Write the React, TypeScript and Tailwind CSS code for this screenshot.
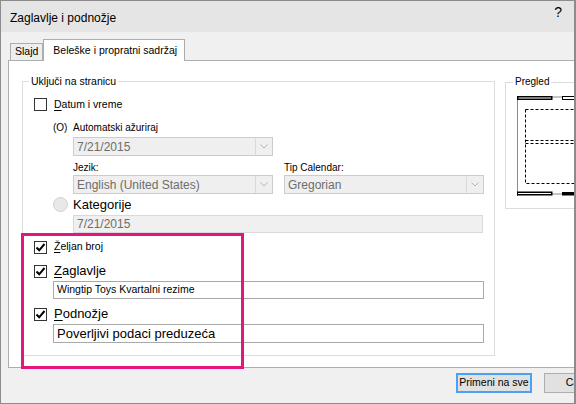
import React from 'react';

const FONT = { fontFamily: '"Liberation Sans", Arial, sans-serif' };

function CheckBox({ checked }: { checked?: boolean }) {
  return (
    <div className="w-[13px] h-[13px] shrink-0 border border-[#333333] bg-white flex items-center justify-center">
      {checked && (
        <svg width="11" height="11" viewBox="0 0 11 11">
          <path d="M1.5 5.5 L4.2 8.3 L9.5 2" fill="none" stroke="#000" strokeWidth="2" />
        </svg>
      )}
    </div>
  );
}

function Dropdown({ value, width }: { value: string; width: string }) {
  return (
    <div className={`${width} h-[19px] border border-[#cccccc] bg-[#efefef] flex items-stretch`}>
      <div className="flex-1 pl-[3px] flex items-center text-[12px] text-[#6d6d6d] leading-none">{value}</div>
      <div className="w-[17px] border-l border-[#dadada] flex items-center justify-center">
        <svg width="8" height="5" viewBox="0 0 8 5">
          <path d="M0.5 0.5 L4 4 L7.5 0.5" fill="none" stroke="#b5b5b5" strokeWidth="1" />
        </svg>
      </div>
    </div>
  );
}

function PreviewDrawing() {
  return (
    <svg width="70" height="100" viewBox="0 0 70 100">
      {/* page outline */}
      <line x1="0.5" y1="0" x2="0.5" y2="100" stroke="#8a8a8a" />
      <line x1="0" y1="1" x2="70" y2="1" stroke="#8a8a8a" />
      <line x1="0" y1="98" x2="70" y2="98" stroke="#8a8a8a" />
      {/* header bars */}
      <rect x="0.75" y="0.75" width="34" height="2.5" fill="#fff" stroke="#000" strokeWidth="1.5" />
      <rect x="45.5" y="0.5" width="24" height="3" fill="#fff" stroke="#000" strokeWidth="1" />
      {/* footer bars */}
      <rect x="0.75" y="96.25" width="34" height="2.5" fill="#fff" stroke="#000" strokeWidth="1.5" />
      <rect x="45" y="96" width="25" height="3.5" fill="#000" />
      {/* dashed content areas */}
      <rect x="8.5" y="13.5" width="70" height="74" fill="none" stroke="#000" strokeDasharray="3 2" />
      <line x1="8.5" y1="44.5" x2="70" y2="44.5" stroke="#000" strokeDasharray="3 2" />
      <line x1="8.5" y1="47.5" x2="70" y2="47.5" stroke="#000" strokeDasharray="3 2" />
    </svg>
  );
}

export default function App() {
  return (
    <div
      className="relative w-[576px] h-[404px] overflow-hidden bg-[#f0f0f0] border-l border-t border-b border-r-2 border-[#8c8c8c] flex flex-col text-black"
      style={FONT}
    >
      {/* Title bar */}
      <div className="h-[31px] shrink-0 bg-[#e5e5e5] flex items-center justify-between pl-[9px] pr-[12px]">
        <span className="text-[12px] pt-[2px]">Zaglavlje i podnožje</span>
        <span className="text-[14px] -mt-[8px]">?</span>
      </div>

      {/* Tabs */}
      <div className="pt-[7px] pl-[9px] flex items-end shrink-0">
        <div className="h-[17px] border border-b-0 border-[#adadad] bg-[#eeeeee] px-[4px] flex items-center text-[10.5px]">
          Slajd
        </div>
        <div className="relative z-10 -mb-px h-[22px] border border-b-0 border-[#adadad] bg-white pl-[9px] pr-[7px] flex items-center text-[10.5px]">
          Beleške i propratni sadržaj
        </div>
      </div>

      {/* Tab panel */}
      <div className="ml-[7px] h-[308px] shrink-0 border-t border-l border-b border-[#adadad] bg-white flex items-start pl-[13px] pt-[14px]">
        <fieldset className="w-[473px] h-[281px] shrink-0 border border-[#dcdcdc]">
          <legend className="ml-[6px] px-[2px] text-[10.5px] leading-[12px]">Uključi na stranicu</legend>
          <div className="pl-[11px] pt-[5px] flex flex-col text-[10.5px]">
            <div className="h-[25px] flex items-center gap-[7px]">
              <CheckBox />
              <span>
                <span className="underline underline-offset-2">D</span>atum i vreme
              </span>
            </div>
            <div className="h-[20px] pl-[19px] flex items-center text-[10px]">
              <span className="w-[20px]">(O)</span>
              <span>Automatski ažuriraj</span>
            </div>
            <div className="pl-[39px]">
              <Dropdown value="7/21/2015" width="w-[200px]" />
            </div>
            <div className="h-[19px] pl-[39px] pt-[3px] flex items-center gap-[11px] text-[10px]">
              <span className="w-[200px]">Jezik:</span>
              <span className="w-[200px]">Tip Calendar:</span>
            </div>
            <div className="pl-[39px] flex gap-[11px]">
              <Dropdown value="English (United States)" width="w-[200px]" />
              <Dropdown value="Gregorian" width="w-[200px]" />
            </div>
            <div className="h-[21px] pl-[19px] flex items-center gap-[5px]">
              <div className="w-[15px] h-[15px] rounded-full border border-[#d2d2d2] bg-[#e8e8e8]" />
              <span className="text-[13px]">Kategorije</span>
            </div>
            <div className="ml-[39px] w-[410px] h-[18px] border border-[#d9d9d9] bg-[#f0f0f0] pl-[3px] flex items-center text-[12px] text-[#6d6d6d]">
              7/21/2015
            </div>
            <div className="h-[28px] flex items-center gap-[7px]">
              <CheckBox checked />
              <span>
                <span className="underline underline-offset-2">Ž</span>eljan broj
              </span>
            </div>
            <div className="h-[20px] flex items-center gap-[7px]">
              <CheckBox checked />
              <span className="text-[13px]">
                <span className="underline underline-offset-2">Z</span>aglavlje
              </span>
            </div>
            <div className="ml-[19px] w-[431px] h-[18px] border border-[#a9a9a9] pl-[3px] flex items-center text-[10.5px]">
              Wingtip Toys Kvartalni rezime
            </div>
            <div className="h-[25px] pt-[5px] flex items-center gap-[7px]">
              <CheckBox checked />
              <span className="text-[13px]">
                <span className="underline underline-offset-2">P</span>odnožje
              </span>
            </div>
            <div className="ml-[19px] w-[431px] h-[19px] border border-[#a9a9a9] pl-[3px] flex items-center text-[13px]">
              Poverljivi podaci preduzeća
            </div>
          </div>
        </fieldset>

        <fieldset className="ml-[10px] w-[100px] h-[133px] shrink-0 border border-[#dcdcdc] mt-[1px]">
          <legend className="ml-[7px] px-[2px] text-[10px] leading-[12px]">Pregled</legend>
          <div className="pl-[11px] pt-[8px]">
            <PreviewDrawing />
          </div>
        </fieldset>
      </div>

      {/* Buttons */}
      <div className="pt-[5px] pl-[455px] flex gap-[12px] shrink-0">
        <button className="w-[76px] h-[20px] shrink-0 border-2 border-[#4ba2f2] bg-[#e1e1e1] text-[10.5px] flex items-center justify-center">
          Primeni na sve
        </button>
        <button className="w-[76px] h-[20px] shrink-0 border border-[#adadad] bg-[#e1e1e1] text-[10.5px] flex items-center justify-center">
          Cancel
        </button>
      </div>

      {/* Highlight annotation */}
      <div className="absolute left-[20px] top-[232px] w-[223px] h-[136px] border-[3px] border-[#e4157f] pointer-events-none" />
    </div>
  );
}
